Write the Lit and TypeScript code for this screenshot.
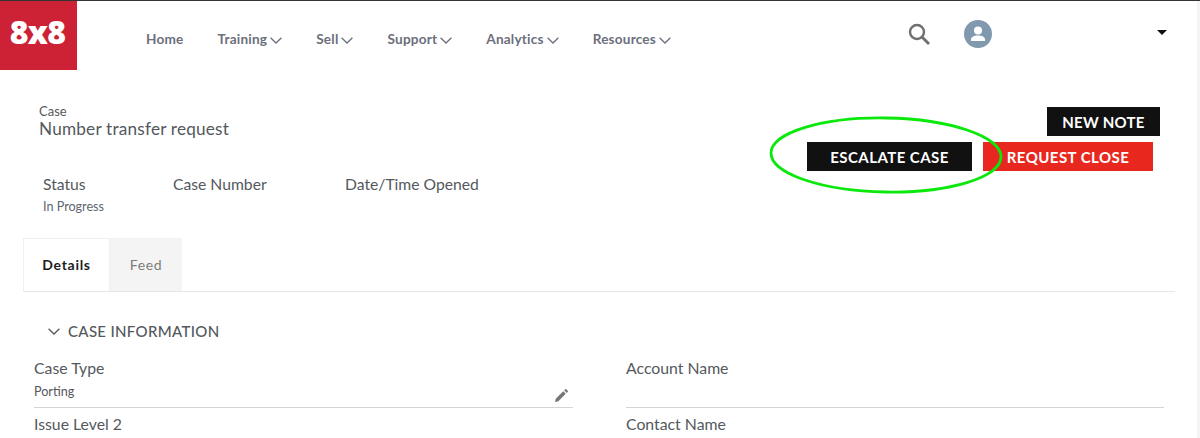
import { LitElement, html, css, svg } from "lit";
import { customElement } from "lit/decorators.js";

const chev = svg`<svg class="chev" viewBox="0 0 12 7" width="12" height="7"><path d="M.6.7 6 6 11.4.7" fill="none" stroke="currentColor" stroke-width="1.3"/></svg>`;

@customElement("app-root")
export class AppRoot extends LitElement {
  static styles = css`
    :host { display: block; position: relative; height: 438px; overflow: hidden; background: #fff; border-top: 1px solid #333; box-sizing: border-box; font-family: Lato, "Noto Sans", sans-serif; color: #54585d; }
    .top { display: flex; height: 69px; }
    .logo { width: 77px; height: 69px; background: #cd2235; color: #fff; font: 800 32px/1 "Open Sans", sans-serif; display: flex; align-items: center; justify-content: center; padding: 0 2px 8px 0; box-sizing: border-box; letter-spacing: -.8px; }
    nav { display: flex; gap: 34px; margin-left: 69px; padding-top: 30px; font-size: 13.6px; font-weight: 700; color: #6c6f7c; line-height: 16px; height: 16px; }
    nav span { display: flex; align-items: center; gap: 3px; letter-spacing: .2px; }
    .chev { display: block; margin-top: 2px; }
    .tools { margin-left: auto; display: flex; align-items: flex-start; }
    .search { margin-top: 22px; }
    .avatar { margin: 19px 0 0 33px; width: 28px; height: 28px; border-radius: 50%; background: #8199af; display: flex; align-items: center; justify-content: center; }
    .caret { width: 0; height: 0; border: 5px solid transparent; border-top-color: #111; border-bottom: 0; margin: 29px 33px 0 165px; }
    .head { display: flex; justify-content: space-between; padding: 34px 40px 0 39px; height: 67px; }
    .kicker { font-size: 13px; line-height: 14px; }
    h1 { margin: 0; font-size: 17.2px; font-weight: 400; line-height: 21px; letter-spacing: .2px; }
    .actions { display: flex; flex-direction: column; align-items: flex-end; gap: 6px; padding-top: 3px; }
    .row { display: flex; gap: 11px; margin-right: 7px; }
    button { border: 0; height: 29px; padding: 1px 0 0; font: 700 15px/28px Lato, sans-serif; color: #fff; letter-spacing: .45px; background: #111; }
    .note { width: 113px; letter-spacing: .25px; }
    .esc { width: 165px; }
    .close { width: 170px; background: #e8281f; }
    .meta { display: flex; padding: 3px 0 0 43px; font-size: 15.7px; line-height: 20px; height: 66px; box-sizing: border-box; }
    .meta > div:nth-child(1) { width: 130px; }
    .meta > div:nth-child(2) { width: 172px; }
    .val { font-size: 12.6px; line-height: 16px; margin-top: 5px; color: #5d6670; }
    .tabs { display: flex; margin: 0 25px 0 23px; border-bottom: 1px solid #e6e6e6; height: 54px; box-sizing: border-box; margin-top: 1px; }
    .tab { font-size: 14px; letter-spacing: .7px; line-height: 53px; text-align: center; }
    .tab.on { width: 87px; font-weight: 700; color: #1d1d1f; border: 1px solid #f0f0f0; border-width: 1px 1px 0 1px; box-sizing: border-box; line-height: 52px; }
    .tab.off { width: 72px; background: #f4f4f4; color: #7c7c7c; }
    .section { display: flex; align-items: center; gap: 8px; margin: 29px 0 0 48px; font-size: 15px; font-weight: 500; letter-spacing: .33px; line-height: 20px; color: #54585d; }
    .section .chev { margin: 0; }
    .grid { display: grid; grid-template-columns: 539px 538px; gap: 0 53px; margin: 17px 0 0 34px; }
    .field { position: relative; height: 49px; border-bottom: 1px solid #d5d5d5; font-size: 15.8px; line-height: 20px; padding-top: 3px; margin-top: -3px; }
    .plain { font-size: 15.8px; line-height: 20px; padding-top: 6px; }
    .field .val { margin-top: 6px; color: #54585d; }
    .pen { position: absolute; right: 5px; bottom: 5px; }
    .glow { position: absolute; left: 769px; top: 115px; pointer-events: none; }
    .edge { position: absolute; right: 0; top: 0; bottom: 0; width: 3px; background: #f5f5f5; }
  `;

  render() {
    const items = ["Training", "Sell", "Support", "Analytics", "Resources"];
    return html`
      <div class="top">
        <div class="logo">8x8</div>
        <nav>
          <span>Home</span>
          ${items.map((i) => html`<span>${i}${chev}</span>`)}
        </nav>
        <div class="tools">
          <svg class="search" width="23" height="23" viewBox="0 0 23 23"><circle cx="9" cy="9" r="7" fill="none" stroke="#6f6f6f" stroke-width="2.4"/><path d="M14 14l7 7" stroke="#6f6f6f" stroke-width="2.8"/></svg>
          <div class="avatar"><svg width="18" height="18" viewBox="0 0 18 18" fill="#fff"><circle cx="9" cy="5.5" r="4"/><path d="M2 16v-1.5C2 12 5 10.500 9 10.500s7 1.500 7 4V16z"/></svg></div>
          <div class="caret"></div>
        </div>
      </div>
      <div class="head">
        <div><div class="kicker">Case</div><h1>Number transfer request</h1></div>
        <div class="actions">
          <button class="note">NEW NOTE</button>
          <div class="row"><button class="esc">ESCALATE CASE</button><button class="close">REQUEST CLOSE</button></div>
        </div>
      </div>
      <div class="meta">
        <div>Status<div class="val">In Progress</div></div>
        <div>Case Number</div>
        <div>Date/Time Opened</div>
      </div>
      <div class="tabs"><div class="tab on">Details</div><div class="tab off">Feed</div></div>
      <div class="section">${chev}<span>CASE INFORMATION</span></div>
      <div class="grid">
        <div class="field">Case Type<div class="val">Porting</div>
          <svg class="pen" width="13" height="13" viewBox="0 0 14 14" fill="#777"><path d="M0 14l.8-3.600 8-8 2.800 2.800-8 8zM9.800 1.400 11 .2a.8.8 0 0 1 1 0l1.800 1.800a.8.8 0 0 1 0 1L12.600 4.200z"/></svg>
        </div>
        <div class="field">Account Name</div>
        <div class="plain">Issue Level 2</div>
        <div class="plain">Contact Name</div>
      </div>
      <div class="edge"></div>
      <svg class="glow" width="234" height="80" viewBox="0 0 234 80"><ellipse cx="117" cy="39" rx="115" ry="37" fill="none" stroke="#0be80b" stroke-width="2.800" transform="rotate(1 117 39)"/></svg>
    `;
  }
}
